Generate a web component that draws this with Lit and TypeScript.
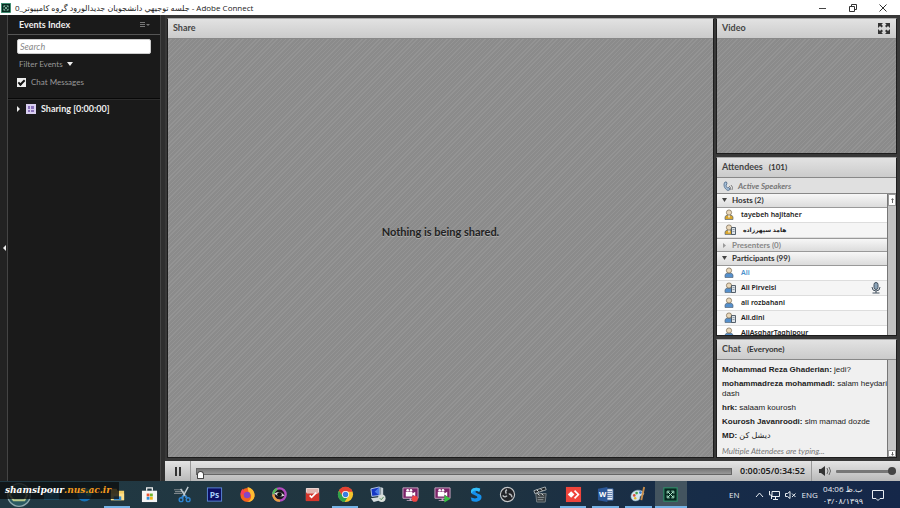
import { LitElement, html, css, svg } from "lit";
import { customElement } from "lit/decorators.js";
import { classMap } from "lit/directives/class-map.js";

const icon = (body: unknown, size = 18, cls = "") =>
  html`<svg class=${cls} width=${size} height=${size} viewBox="0 0 18 18" aria-hidden="true">${body}</svg>`;

const connectGlyph = svg`<rect x="1" y="1" width="16" height="16" fill="#062a20" stroke="#2f8a68" stroke-width="1.4"/>
  <path d="M5 8V5h3M13 8V5h-3M5 10v3h3M13 10v3h-3M6 6l6 6M12 6l-6 6" fill="none" stroke="#a9e3c8" stroke-width="1.2"/>`;

const purpleBoard = svg`<path d="M1 2h16v11H1z" fill="#7b2468" stroke="#c9a9c4"/><path d="M4 6h7v5H4zM11 8l3-2v5l-3-2z" fill="#fff"/>
  <circle cx="6" cy="4.500" r="1.400" fill="#fff"/><circle cx="9.500" cy="4.500" r="1.400" fill="#fff"/><path d="M8 13h2v2H8zM5 15h7v1H5z" fill="#c9a9c4"/>`;

interface App { name: string; art: unknown; open?: boolean; active?: boolean; }

const apps: App[] = [
  { name: "Start", art: svg`<circle cx="9" cy="9" r="8.500" fill="#2c5a62" stroke="#8fa9ae"/><path d="M4 6h9l2 3-2 4H5L2 9z" fill="none" stroke="#b9c98b" stroke-width="1.500"/>` },
  { name: "Mail", art: svg`<path d="M1 4h16v10H1z" fill="#1c87c9"/><path d="M1 4l8 6 8-6" fill="#56b4e8"/>` },
  { name: "Edge", art: svg`<circle cx="9" cy="9" r="7.500" fill="#1673b8"/><path d="M2 8C4 2 14 0 16.500 8c0 4-6 3-6 1 1-4-6-4-8.500-1z" fill="#3cc0a5"/>` },
  { name: "File Explorer", open: true, art: svg`<path d="M2 3h6l1 2h7v10H2z" fill="#f4ce65"/><path d="M2 8h14v7H2z" fill="#ffe08a"/><path d="M5 11h8v4H5z" fill="#3c8dcc"/>` },
  { name: "Store", art: svg`<path d="M6 5V2h6v3" fill="none" stroke="#f5f5f5" stroke-width="1.300"/><path d="M1 5h16v12H1z" fill="#f5f5f5"/><path d="M6 8h3v3H6z" fill="#e8502c"/><path d="M9.500 8h3v3h-3z" fill="#6fb52c"/><path d="M6 11.500h3v3H6z" fill="#2b8fd8"/><path d="M9.500 11.500h3v3h-3z" fill="#f2b61c"/>` },
  { name: "Snipping Tool", art: svg`<path d="M0 4h9M1 6h10M0 8h9" stroke="#7d868a" stroke-width="1.200"/><path d="M15 1L9 12M7 3l6 9" stroke="#c2cdd3" stroke-width="1.500"/><path d="M10 10l-2 3M12 10l2 3" stroke="#2d83d0" stroke-width="2"/><circle cx="7.500" cy="14.500" r="2" fill="none" stroke="#2d83d0" stroke-width="1.500"/><circle cx="15" cy="14.500" r="2" fill="none" stroke="#2d83d0" stroke-width="1.500"/>` },
  { name: "Photoshop", art: svg`<rect x="1.500" y="2" width="15" height="14" fill="#0c0f63" stroke="#5b86d8"/><text x="9" y="12.500" text-anchor="middle" font-family="Open Sans, sans-serif" font-weight="700" font-size="9" fill="#a7cdf7">Ps</text>` },
  { name: "Firefox", art: svg`<circle cx="9" cy="9.500" r="7.500" fill="#f4631e"/><path d="M9 1c5 1 8 5 7.500 10-1 4-4 6-7.500 6 5-3 5-8 1-11z" fill="#ffbd32"/><circle cx="8.500" cy="9.500" r="3.500" fill="#8346c9"/><path d="M1.500 9C2 5 3 4 4 3c0 2 2 3 4 3-1 1-3 1-3 3z" fill="#f83e5b"/>` },
  { name: "Media Viewer", art: svg`<circle cx="9" cy="9" r="6.500" fill="#1c1820" stroke="#b44cc0" stroke-width="2.500"/><path d="M2.500 9a6.500 6.500 0 0 1 4-6" stroke="#52bd58" stroke-width="2.500" fill="none"/><path d="M2.500 9a6.500 6.500 0 0 0 7 6.500" stroke="#e8a23c" stroke-width="2.500" fill="none"/><path d="M3.500 8q5-4 11 2-6 3-11-2z" fill="#ddd"/><circle cx="9" cy="9" r="2.500" fill="#111"/>` },
  { name: "Reader", art: svg`<rect x="2" y="2" width="14" height="14" rx="1" fill="#ecdcd9"/><path d="M2 7h14v9H2z" fill="#d5352b"/><path d="M3 3h12v5H3z" fill="#e3b7b0"/><path d="M6 10l2 2 5-5" stroke="#fff" stroke-width="1.800" fill="none"/>` },
  { name: "Chrome", open: true, art: svg`<circle cx="9" cy="9" r="8" fill="#f6c42c"/><path d="M2 5a8 8 0 0 1 14.500 1H9a3.500 3.500 0 0 0-3.300 4z" fill="#e34133"/><path d="M2 5a8 8 0 0 0 6 12l3.500-5.500A3.500 3.500 0 0 1 6 10.500z" fill="#2fa24c"/><circle cx="9" cy="9" r="3.700" fill="#fff"/><circle cx="9" cy="9" r="2.900" fill="#3b7de0"/>` },
  { name: "Remote Desktop", art: svg`<path d="M2 3l9-2v9l-8 1z" fill="#1536c4" stroke="#b9cbe6"/><path d="M6 6l5-5v9z" fill="#4c7be6"/><path d="M12 1l3 1v9l-3-1z" fill="#c4ced4"/><path d="M2 13l8-1 2 3-7 2z" fill="#d4dcde"/><circle cx="13.500" cy="13" r="4" fill="#d9dfda"/><path d="M11.500 13l1.500 1.500 2.500-3" stroke="#4c8a55" fill="none"/>` },
  { name: "Recorder", art: svg`${purpleBoard}<circle cx="13.500" cy="13.500" r="3.300" fill="#ef4444"/>` },
  { name: "Player", art: svg`${purpleBoard}<path d="M11 9.500l6.500 4-6.500 4z" fill="#37c440"/>` },
  { name: "Share Tool", art: svg`<path d="M14 3C8 0 2 4 5 8c2 2 6 2 6 4 0 1-3 2-7 0l1 4c6 2 12-1 10-6-1-2-6-2-6-4 0-1 2-1 4 0z" fill="#1590ec"/><path d="M14 3C8 0 2 4 5 8c1-4 4-4 8-2z" fill="#35bff7"/>` },
  { name: "OBS", art: svg`<circle cx="9" cy="9" r="7.500" fill="#222327" stroke="#c4c6c8" stroke-width="1.200"/><path d="M9 9C7 8 6 5 8.500 4M9 9c2-1 5 0 4.500 3M9 9c-1 3-4 3-5 1" fill="none" stroke="#b7babd" stroke-width="1.600"/><circle cx="9" cy="9" r="1.500" fill="#222327"/>` },
  { name: "Movie Maker", art: svg`<path d="M4 8h11l-1 9H5z" fill="#3a4043" stroke="#778085"/><path d="M2 5l12-4 1 3L3 8z" fill="#202427" stroke="#aab1b5"/><path d="M5 4l2 2M9 3l2 2M6 8l2 2M10 8l2 2" stroke="#eee"/><path d="M6 12h7M6 14.500h6" stroke="#93999c"/>` },
  { name: "AnyDesk", open: true, art: svg`<path d="M1 1h16v16H1z" fill="#ef443b"/><path d="M3 9l3.500-3.500L10 9l-3.500 3.500z" fill="#fff"/><path d="M9.500 5.500l1.200-1.200L15.400 9l-4.700 4.700-1.200-1.200L13 9z" fill="#fff"/>` },
  { name: "Word", open: true, art: svg`<path d="M8 3h9v12H8z" fill="#f2f5fa" stroke="#2b5797"/><path d="M10 6h6M10 8h6M10 10h6M10 12h6" stroke="#2b5797" stroke-width=".8"/><path d="M1 3l10-2v16L1 15z" fill="#2b5797"/><text x="6" y="12" text-anchor="middle" font-family="Open Sans, sans-serif" font-weight="700" font-size="8" fill="#fff">W</text>` },
  { name: "Paint", open: true, art: svg`<path d="M1 11c0-5 6-8 11-6 4 2 3 5 0 5-3 1 0 3-3 5-4 2-8 0-8-4z" fill="#d4e6ef" stroke="#87a8ba" stroke-width=".6"/><circle cx="4.500" cy="10" r="1.400" fill="#dc4d3a"/><circle cx="7" cy="7.500" r="1.400" fill="#45a64c"/><circle cx="11" cy="7" r="1.400" fill="#3578cf"/><circle cx="5.500" cy="13" r="1.300" fill="#e6b92e"/><path d="M15 1l-3 14" stroke="#c68c4b" stroke-width="2"/>` },
  { name: "Adobe Connect", open: true, active: true, art: connectGlyph },
];

interface Person { name: string; kind: string; mobile?: boolean; mic?: boolean; self?: boolean; rtl?: boolean; }
const hosts: Person[] = [
  { name: "tayebeh hajitaher", kind: "host" },
  { name: "هامد سپهرزاده", kind: "host", mobile: true, rtl: true },
];
const participants: Person[] = [
  { name: "Ali", kind: "guest", self: true },
  { name: "Ali Pirveisi", kind: "guest", mobile: true, mic: true },
  { name: "ali rozbahani", kind: "guest" },
  { name: "Ali.dini", kind: "guest", mobile: true },
  { name: "AliAsgharTaghipour", kind: "guest" },
];
const messages = [
  ["Mohammad Reza Ghaderian", "jedi?"],
  ["mohammadreza mohammadi", "salam heydari dash"],
  ["hrk", "salaam kourosh"],
  ["Kourosh Javanroodi", "slm mamad dozde"],
  ["MD", "دیشل کن"],
];

@customElement("title-bar")
class TitleBar extends LitElement {
  static styles = css`
    :host { display: flex; align-items: center; background: #fff; color: #222; font: 8px/15px "Open Sans", "DejaVu Sans", sans-serif; }
    .logo { margin: 0 4px 0 1px; }
    .title { flex: 1; white-space: nowrap; font: inherit; margin: 0; }
    button { width: 30px; height: 15px; padding: 0; border: 0; background: none; display: grid; place-items: center; }
    button:last-child { margin-right: 2px; }
    svg { display: block; }
  `;
  render() {
    return html`${icon(connectGlyph, 10, "logo")}
      <h1 class="title">جلسه توجيهي دانشجويان جديدالورود گروه کامپيوتر_0 - Adobe Connect</h1>
      <button aria-label="Minimize"><svg width="8" height="8"><path d="M0 4.500h7" stroke="#444"/></svg></button>
      <button aria-label="Restore"><svg width="8" height="8"><path d="M.5 2.500h5v5h-5zM2.500 2V.5h5v5H6" fill="none" stroke="#333"/></svg></button>
      <button aria-label="Close"><svg width="8" height="8"><path d="M.5.5l7 7M7.500.5l-7 7" stroke="#333"/></svg></button>`;
  }
}

@customElement("events-index")
class EventsIndex extends LitElement {
  static styles = css`
    :host { display: block; background: #1a1a1a; border: solid #444; border-width: 0 1px; color: #999; font: 8px/12px Lato, sans-serif; }
    .head { display: flex; justify-content: space-between; align-items: center; height: 19px; padding: 0 10px 0 11px; border-bottom: 1px solid #555; color: #eee; }
    h2 { font: 700 9px/12px Lato, sans-serif; margin: 0; }
    button { font: inherit; color: inherit; background: none; border: 0; padding: 0; display: flex; align-items: center; gap: 4px; }
    .tools { padding: 4px 9px 10px 9px; border-bottom: 1px solid #080808; }
    .search { display: block; box-sizing: border-box; width: 100%; height: 15px; border: 1px solid #ccc; border-radius: 2px; background: #fff; padding: 0 2px; font: italic 9px/12px Lato, sans-serif; }
    .search::placeholder { color: #888; opacity: 1; }
    .filter { margin: 4px 2px 6px; }
    .check { display: flex; align-items: center; gap: 5px; }
    .check input { appearance: none; width: 9px; height: 9px; margin: 0; background: #eee; display: grid; place-items: center; }
    .check input:checked::before { content: ""; width: 5px; height: 2px; border: solid #111; border-width: 0 0 2px 2px; transform: rotate(-45deg); }
    .item { padding: 3px 8px 3px 9px; border-top: 1px solid #2c2c2c; color: #eee; font: 700 9px/12px Lato, sans-serif; }
    .item svg { display: block; }
    .item button { gap: 5px; }
  `;
  render() {
    return html`
      <div class="head"><h2>Events Index</h2>
        <button aria-label="Options"><svg width="10" height="7"><path d="M0 1.500h5M0 3.500h5M0 5.500h5" stroke="#777"/><path d="M6 3h4L8 5z" fill="#777"/></svg></button></div>
      <div class="tools">
        <input class="search" type="text" placeholder="Search" aria-label="Search">
        <button class="filter">Filter Events <svg width="6" height="4"><path d="M0 0h6L3 4z" fill="#eee"/></svg></button>
        <label class="check"><input type="checkbox" checked>Chat Messages</label>
      </div>
      <div class="item"><button><svg width="4" height="6"><path d="M0 0l3 3-3 3z" fill="#eee"/></svg>
        <svg width="10" height="10"><rect width="10" height="10" fill="#d9cff0"/><path d="M2 2h2v3H2zM5 2h3v3H5zM2 6h2v2H2zM5 6h3v2H5z" fill="#8b73bb"/></svg>
        Sharing [0:00:00]</button></div>`;
  }
}

@customElement("attendee-list")
class AttendeeList extends LitElement {
  static styles = css`
    :host { display: flex; flex-direction: column; min-height: 0; flex: 1; background: #fff; color: #222; font: 600 7px/14px "Noto Sans", "DejaVu Sans", sans-serif; }
    .speakers { display: flex; align-items: center; gap: 5px; height: 16px; padding: 0 6px; background: #e0e0e0; color: #777; font: italic 700 8px/14px Lato, sans-serif; border-bottom: 1px solid #888; box-sizing: border-box; }
    .body { display: flex; flex: 1; min-height: 0; }
    .people { flex: 1; overflow: hidden; }
    .group { display: flex; align-items: center; gap: 5px; width: 100%; height: 14px; box-sizing: border-box; padding: 0 5px; border: solid #999; border-width: 0 0 1px; background: linear-gradient(#f7f7f7, #dcdcdc); font: 700 8px/13px Lato, sans-serif; color: #333; text-align: left; }
    .group svg { width: 5px; }
    .empty { color: #888; border-top-width: 1px; }
    ul { list-style: none; margin: 0; padding: 0; }
    li { display: flex; align-items: center; height: 15px; box-sizing: border-box; border-bottom: 1px solid #ddd; padding: 0 6px 0 7px; white-space: nowrap; }
    li:nth-child(even) { background: #f5f5f5; }
    .badge { width: 17px; flex: none; }
    .name { flex: 1; }
    .rtl { font-size: 6px; font-weight: 700; padding-left: 2px; }
    .self { color: #4a90cc; }
    .bar { width: 9px; box-sizing: border-box; border-left: 1px solid #777; background: #c2c2c2; }
    .bar button { display: block; width: 100%; height: 12px; padding: 0; border: 1px solid #999; background: #fff; }
    .bar svg { display: block; margin: auto; }
    svg { display: block; }
  `;
  person(p: Person) {
    const tint = p.kind === "host" ? "#d9a62e" : "#5590cc";
    return html`<li>
      <svg class="badge" width="17" height="12" viewBox="0 0 17 12"><path d="M1 10.500V8q0-2 4-2t4 2v2.500z" fill=${tint} stroke="#59697a" stroke-width=".7"/><circle cx="5" cy="3.500" r="2.600" fill="#ead8bb" stroke="#75664c" stroke-width=".7"/>
        ${p.kind === "host" ? svg`<path d="M4 6.500l1 3 1-3z" fill="#fff"/>` : ""}
        ${p.mobile ? svg`<path d="M7.500 3.500h4v7h-4z" fill="#dde3e8" stroke="#46525e" stroke-width=".9"/><path d="M8.500 5.500h2M8.500 7.500h2" stroke="#70808e" stroke-width=".7"/>` : ""}</svg>
      <span class=${classMap({ name: true, self: !!p.self, rtl: !!p.rtl })}>${p.name}</span>
      ${p.mic ? html`<svg width="10" height="12" viewBox="0 0 10 12"><rect x="3" y=".5" width="4" height="7" rx="2" fill="#8ca4b8" stroke="#445260"/><path d="M1 5q0 4 4 4t4-4M5 9v2M1.500 11h7" fill="none" stroke="#445260"/></svg>` : ""}
    </li>`;
  }
  group(title: string, open: boolean) {
    return html`<button class=${classMap({ group: true, empty: !open })}><svg width="5" height="5">${open ? svg`<path d="M0 0h5L2.500 4z" fill="#444"/>` : svg`<path d="M1 0l3 2.500L1 5z" fill="#999"/>`}</svg>${title}</button>`;
  }
  render() {
    return html`
      <div class="speakers"><svg width="10" height="10"><path d="M2 1C0 3 1 8 5 9.500l2-1-1-2-1.500.5Q3 6 3 4l1-1-.5-2z" fill="#a9c3dc" stroke="#4b6684" stroke-width=".8"/><path d="M6 5q2 1 2 4M8 4q2 2 2 5" fill="none" stroke="#666" stroke-width=".8"/></svg>Active Speakers</div>
      <div class="body"><div class="people">
        ${this.group("Hosts (2)", true)}<ul>${hosts.map((p) => this.person(p))}</ul>
        ${this.group("Presenters (0)", false)}
        ${this.group("Participants (99)", true)}<ul>${participants.map((p) => this.person(p))}</ul>
      </div><div class="bar"><button aria-label="Scroll up"><svg width="3" height="5"><path d="M0 2l1.500-2L3 2zM1 2h1v3H1z" fill="#666"/></svg></button></div></div>`;
  }
}

@customElement("meeting-room")
class MeetingRoom extends LitElement {
  static styles = css`
    :host { display: flex; flex-direction: column; min-width: 0; min-height: 0; background: #383838; color: #333; font: 9px/14px Lato, sans-serif; }
    .pods { flex: 1; min-height: 0; display: grid; grid-template-columns: 1fr 181px; gap: 2px; padding: 3px 3px 3px 2px; }
    .side { display: grid; grid-template-rows: 136fr 179fr 119fr; gap: 3px; min-height: 0; }
    .pod { display: flex; flex-direction: column; min-height: 0; box-sizing: border-box; border: 1px solid #1d1d1d; border-top-color: #aaa; overflow: hidden; }
    header { display: flex; align-items: center; gap: 6px; height: 20px; flex: none; box-sizing: border-box; padding: 0 6px 1px 5px; background: linear-gradient(#e2e2e2, #cbcbcb); border-bottom: 1px solid #888; }
    h2 { margin: 0; font: 700 9px/14px Lato, sans-serif; color: #444; }
    .count { font-size: 8px; font-weight: 700; }
    .full { margin-left: auto; border: 0; padding: 0; background: none; }
    .full svg { display: block; }
    .hatch { flex: 1; display: grid; place-items: center; background: repeating-linear-gradient(135deg, #8b8b8b 0 2px, #949494 2px 3px); }
    .note { margin: 0 0 32px; color: #222; font: 700 11px/14px Lato, sans-serif; text-shadow: 0 1px 0 #aaa; }
    .chat { flex: 1; display: flex; min-height: 0; background: #f0f0f0; }
    .log { flex: 1; padding: 5px 0 0 5px; font: 8px/10px "Liberation Sans", "DejaVu Sans", sans-serif; color: #222; }
    .log p { margin: 0 0 4px; }
    .log .typing { font: italic 8px/12px Lato, sans-serif; color: #777; margin: 0; }
    .bar { width: 9px; box-sizing: border-box; border-left: 1px solid #777; background: #c6c6c6; display: flex; align-items: flex-end; }
    .bar button { width: 100%; height: 7px; padding: 0; border: 1px solid #999; background: #fff; display: grid; place-items: center; }
    .play { display: flex; align-items: center; height: 20px; flex: none; background: linear-gradient(#e4e4e4, #b9b9b9); }
    .pause { width: 26px; height: 20px; padding: 0; border: 0; border-right: 1px solid #999; background: none; display: grid; place-items: center; }
    input { appearance: none; margin: 0; background: none; min-width: 0; height: 16px; }
    .seek { flex: 1; margin: 0 8px 0 5px; }
    .seek::-webkit-slider-runnable-track { height: 7px; background: linear-gradient(#777, #999); border: 1px solid #666; box-sizing: border-box; }
    .seek::-webkit-slider-thumb { appearance: none; width: 7px; height: 8px; margin-top: 2px; background: #fff; border: 1px solid #444; border-radius: 4px 4px 1px 1px; box-sizing: border-box; }
    .time { font: 600 9px/14px "Noto Sans", sans-serif; color: #222; padding-right: 6px; }
    .volume { display: flex; align-items: center; gap: 4px; height: 20px; padding: 0 4px 0 7px; border-left: 1px solid #999; }
    .volume input { width: 60px; }
    .volume input::-webkit-slider-runnable-track { height: 3px; background: #777; border-radius: 1px; }
    .volume input::-webkit-slider-thumb { appearance: none; width: 8px; height: 8px; margin-top: -3px; background: #444; border-radius: 50%; }
  `;
  render() {
    return html`
      <div class="pods">
        <section class="pod"><header><h2>Share</h2></header><div class="hatch"><p class="note">Nothing is being shared.</p></div></section>
        <div class="side">
          <section class="pod"><header><h2>Video</h2><button class="full" aria-label="Full screen"><svg width="12" height="11"><path d="M0 0h5L3.500 1.500 5 3 3.500 4.500 2 3 0 5zM12 0H7l1.500 1.500L7 3l1.500 1.500L10 3l2 2zM0 11h5L3.500 9.500 5 8 3.500 6.500 2 8 0 6zM12 11H7l1.500-1.500L7 8l1.500-1.500L10 8l2-2z" fill="#333"/></svg></button></header><div class="hatch"></div></section>
          <section class="pod"><header><h2>Attendees</h2><span class="count">(101)</span></header><attendee-list></attendee-list></section>
          <section class="pod"><header><h2>Chat</h2><span class="count">(Everyone)</span></header>
            <div class="chat"><div class="log">${messages.map(([who, text]) => html`<p><b>${who}:</b> ${text}</p>`)}<p class="typing">Multiple Attendees are typing...</p></div>
              <div class="bar"><button aria-label="Scroll down"><svg width="3" height="4"><path d="M1 0h1v2h1L1.500 4 0 2h1z" fill="#666"/></svg></button></div></div></section>
        </div>
      </div>
      <div class="play">
        <button class="pause" aria-label="Pause"><svg width="6" height="9"><path d="M0 0h2v9H0zM4 0h2v9H4z" fill="#333"/></svg></button>
        <input class="seek" type="range" min="0" max="2092" value="0" aria-label="Position">
        <span class="time">0:00:05/0:34:52</span>
        <div class="volume"><svg width="13" height="10"><path d="M0 3h2l4-3v10L2 7H0z" fill="#333"/><path d="M8 2q2 3 0 6M10 1q3 4 0 8" stroke="#666" fill="none"/></svg>
          <input type="range" value="100" aria-label="Volume"></div>
      </div>`;
  }
}

@customElement("task-bar")
class TaskBar extends LitElement {
  static styles = css`
    :host { display: flex; justify-content: space-between; position: relative; background: linear-gradient(90deg, #213943, #20343f 50%, #172c48 78%, #152749); color: #e8edf2; font: 8px/12px "Open Sans", "DejaVu Sans", sans-serif; }
    .apps { display: flex; flex: none; width: 76%; padding-left: 3px; }
    .app { flex: 1; min-width: 0; padding: 0; border: 0; background: none; display: grid; place-items: center; position: relative; }
    .app svg { display: block; }
    .active { background: #43545f; }
    .open::after { content: ""; position: absolute; bottom: 0; left: 3px; right: 3px; height: 2px; background: #75b3e6; }
    .active::after { left: 0; right: 0; }
    .tray { display: flex; align-items: center; gap: 5px; padding-right: 16px; }
    .lang { margin-right: 11px; }
    .clock { text-align: center; line-height: 12px; margin-right: 4px; }
    .site { position: absolute; left: 0; top: 1px; padding: 0 8px 0 5px; height: 17px; background: rgba(12, 14, 14, .8); color: #fff; font: italic 700 10px/15px "DejaVu Serif Condensed", "DejaVu Serif", serif; text-decoration: none; }
    .site b { color: #f39a1e; }
  `;
  render() {
    return html`
      <div class="apps">${apps.map((a) => html`<button class=${classMap({ app: true, open: !!a.open, active: !!a.active })} aria-label=${a.name}>${icon(a.art, a.name === "Start" ? 24 : a.active ? 15 : 17)}</button>`)}</div>
      <a class="site" href="http://shamsipour.nus.ac.ir">shamsipour<b>.nus.ac.ir</b></a>
      <div class="tray"><span class="lang">EN</span>
        <svg width="9" height="6"><path d="M1 5l3.500-4L8 5" fill="none" stroke="#e8edf2"/></svg>
        <svg width="11" height="10"><path d="M3 1.500h7.500v5H3zM6.500 7v2M4 9.500h5M.5 1v4h2v4" fill="none" stroke="#e8edf2"/></svg>
        <svg width="11" height="10"><path d="M.5 3.500h2l2.500-2v7l-2.500-2h-2zM7 3.500l3.500 3.500M10.500 3.500L7 7" fill="none" stroke="#e8edf2"/></svg>
        <span>ENG</span>
        <span class="clock">ب.ظ 04:06<br>۰۳/۰۸/۱۳۹۹</span>
        <svg width="12" height="12"><path d="M.5 1.500h11v8H8l-2 2-2-2H.5z" fill="none" stroke="#e8edf2"/></svg></div>`;
  }
}

@customElement("app-root")
class AppRoot extends LitElement {
  static styles = css`
    :host { display: grid; grid-template-rows: 15px 1fr 27px; height: 100vh; overflow: hidden; }
    .main { display: grid; grid-template-columns: 7px 154px 1fr; min-height: 0; background: #2e2e2e; }
    meeting-room { border-left: 4px solid #2e2e2e; }
    .fold { border: 0; padding: 0; background: #222; display: grid; place-items: center; }
  `;
  render() {
    return html`<title-bar></title-bar>
      <div class="main"><button class="fold" aria-label="Collapse panel"><svg width="4" height="6"><path d="M4 0L1 3l3 3z" fill="#eee"/></svg></button>
        <events-index></events-index><meeting-room></meeting-room></div>
      <task-bar></task-bar>`;
  }
}
